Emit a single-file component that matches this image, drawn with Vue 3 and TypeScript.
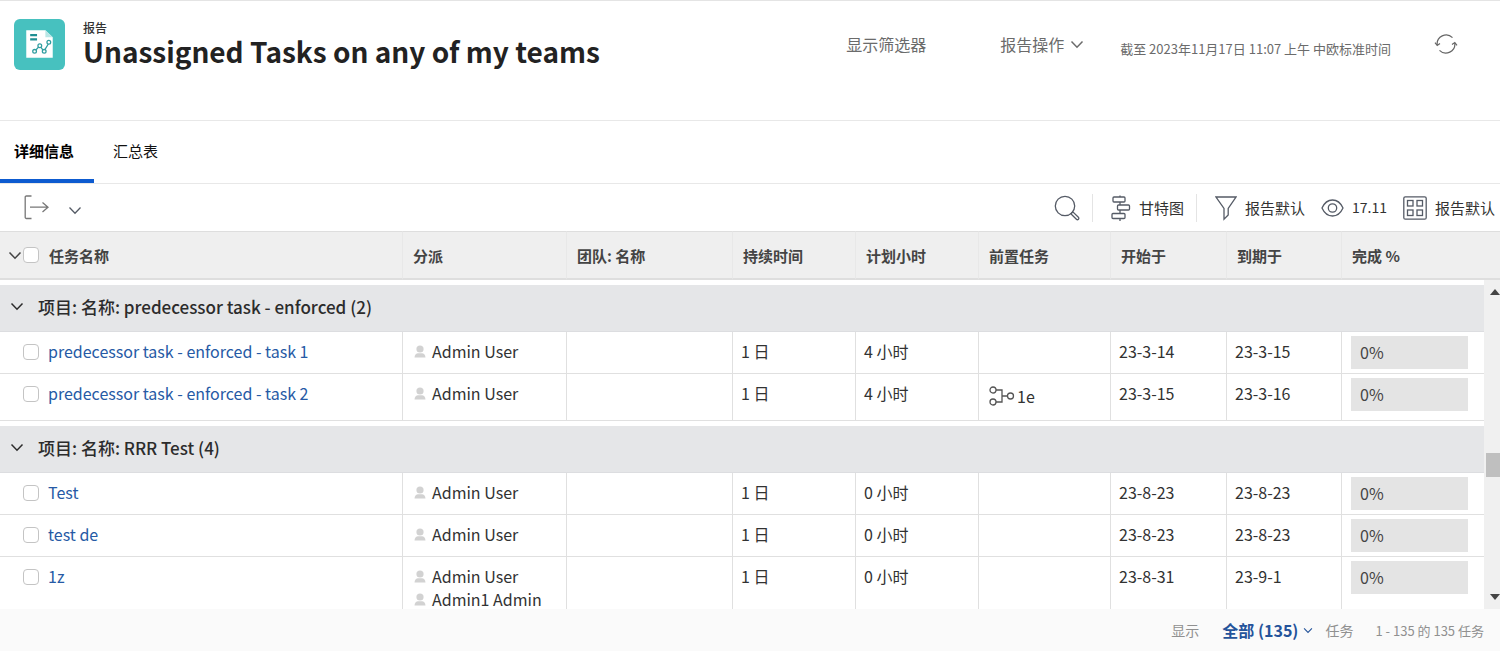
<script setup lang="ts">
import { reactive, ref } from 'vue'

interface Task {
  id: number
  name: string
  assignees: string[]
  team: string
  duration: string
  planned: string
  predecessor: string
  start: string
  due: string
  percent: number
}

interface Group {
  label: string
  open: boolean
  tasks: Task[]
}

const columns = [
  { key: 'assignee', label: '分派' },
  { key: 'team', label: '团队: 名称' },
  { key: 'duration', label: '持续时间' },
  { key: 'planned', label: '计划小时' },
  { key: 'predecessor', label: '前置任务' },
  { key: 'start', label: '开始于' },
  { key: 'due', label: '到期于' },
  { key: 'percent', label: '完成 %' },
]

function task(id: number, name: string, planned: string, start: string, due: string, extra: Partial<Task> = {}): Task {
  return { id, name, assignees: ['Admin User'], team: '', duration: '1 日', planned, predecessor: '', start, due, percent: 0, ...extra }
}

const groups = reactive<Group[]>([
  {
    label: '项目: 名称: predecessor task - enforced (2)',
    open: true,
    tasks: [
      task(1, 'predecessor task - enforced - task 1', '4 小时', '23-3-14', '23-3-15'),
      task(2, 'predecessor task - enforced - task 2', '4 小时', '23-3-15', '23-3-16', { predecessor: '1e' }),
    ],
  },
  {
    label: '项目: 名称: RRR Test (4)',
    open: true,
    tasks: [
      task(3, 'Test', '0 小时', '23-8-23', '23-8-23'),
      task(4, 'test de', '0 小时', '23-8-23', '23-8-23'),
      task(5, '1z', '0 小时', '23-8-31', '23-9-1', { assignees: ['Admin User', 'Admin1 Admin'] }),
    ],
  },
])

const tabs = ['详细信息', '汇总表']
const activeTab = ref(0)
const selected = ref<number[]>([])

function toggleAll(event: Event) {
  const checked = (event.target as HTMLInputElement).checked
  selected.value = checked ? groups.flatMap((g) => g.tasks.map((t) => t.id)) : []
}
</script>

<template>
  <div class="page">
    <header class="header">
      <svg class="logo" viewBox="0 0 52 52" aria-hidden="true">
        <rect width="52" height="52" rx="6" fill="#47c1bf" />
        <path d="M12.500 11.500H32L39.500 18.500V39.500H12.500Z" fill="#fff" />
        <path d="M32 11.500V18.500H39.500Z" fill="#b9e7e6" />
        <path d="M16.500 16.500H23.500M16.500 20.800H23.500" stroke="#1f8f93" stroke-width="2.200" />
        <g fill="none" stroke="#2f9ea0" stroke-width="1.300">
          <path d="M22.300 31.600L25 28.700M27.500 28.900L29.600 31.700M31.500 31.300L35 25.500" />
          <circle cx="21" cy="33" r="1.900" />
          <circle cx="26.300" cy="27.300" r="1.900" />
          <circle cx="30.800" cy="33" r="1.900" />
          <circle cx="35.500" cy="23.700" r="1.900" />
        </g>
      </svg>
      <div class="heading">
        <span class="kind">报告</span>
        <h1>Unassigned Tasks on any of my teams</h1>
      </div>
      <div class="actions">
        <button type="button" class="action">显示筛选器</button>
        <button type="button" class="action menu">
          报告操作
          <svg class="chev" viewBox="0 0 14 9" aria-hidden="true"><path d="M1.500 1.500L7 7.200L12.500 1.500" /></svg>
        </button>
        <span class="asof">截至 2023年11月17日 11:07 上午 中欧标准时间</span>
        <button type="button" class="refresh" aria-label="刷新">
          <svg viewBox="0 0 24 22" aria-hidden="true">
            <path d="M3.200 12A9 9 0 0 1 18.500 4.600M20.800 10A9 9 0 0 1 5.500 17.400" />
            <path d="M1 9.600L3.200 12.400L6 10.400M18 11.600L20.800 9.600L23 12.400" />
          </svg>
        </button>
      </div>
    </header>

    <nav class="tabs">
      <button
        v-for="(tab, i) in tabs"
        :key="tab"
        type="button"
        class="tab"
        :class="{ active: activeTab === i }"
        @click="activeTab = i"
      >{{ tab }}</button>
    </nav>

    <div class="toolbar">
      <button type="button" class="tool export" aria-label="导出">
        <svg class="export-icon" viewBox="0 0 25 25" aria-hidden="true">
          <path d="M7.500 1H2.500A1.200 1.200 0 0 0 1.200 2.200V22.200A1.200 1.200 0 0 0 2.500 23.500H7.500M6 12.200H24M18.500 7.500L24 12.200L18.500 17" />
        </svg>
        <svg class="chev" viewBox="0 0 14 9" aria-hidden="true"><path d="M1.500 1.500L7 7.200L12.500 1.500" /></svg>
      </button>
      <div class="tools">
        <button type="button" class="tool search" aria-label="搜索">
          <svg class="i26" viewBox="0 0 26 26" aria-hidden="true">
            <circle cx="11" cy="11" r="9.700" />
            <path d="M16.800 18.800L18.800 16.800L24.400 22.200A1.400 1.400 0 0 1 22.400 24.300Z" />
          </svg>
        </button>
        <button type="button" class="tool gantt">
          <svg class="gantt-icon" viewBox="0 0 20 26" aria-hidden="true">
            <path d="M9 0.500V2M9 7V10M9 15V18.500M9 23.500V26" />
            <rect x="2" y="2" width="12" height="5" rx="1" />
            <rect x="6.500" y="10" width="12" height="5" rx="1" />
            <rect x="1" y="18.500" width="13" height="5" rx="1" />
          </svg>
          甘特图
        </button>
        <button type="button" class="tool">
          <svg class="filter-icon" viewBox="0 0 22 26" aria-hidden="true">
            <path d="M1 2H21L13.200 13.500V20L9 24.200V13.500Z" />
          </svg>
          报告默认
        </button>
        <button type="button" class="tool view">
          <svg class="eye-icon" viewBox="0 0 23 20" aria-hidden="true">
            <path d="M1 10C3.500 4.500 7.500 2 11.500 2S19.500 4.500 22 10C19.500 15.500 15.500 18 11.500 18S3.500 15.500 1 10Z" />
            <circle cx="11.500" cy="10" r="4.200" />
          </svg>
          17.11
        </button>
        <button type="button" class="tool">
          <svg class="grid-icon" viewBox="0 0 24 24" aria-hidden="true">
            <rect x="0.800" y="0.800" width="22.400" height="22.400" rx="1.500" />
            <rect x="4.500" y="4.500" width="5.500" height="5.500" />
            <rect x="14" y="4.500" width="5.500" height="5.500" />
            <rect x="4.500" y="14" width="5.500" height="5.500" />
            <rect x="14" y="14" width="5.500" height="5.500" />
          </svg>
          报告默认
        </button>
      </div>
    </div>

    <main class="grid">
      <table>
        <colgroup>
          <col />
          <col v-for="c in columns" :key="c.key" :class="'w-' + c.key" />
        </colgroup>
        <thead>
          <tr>
            <th scope="col" class="name-head">
              <div class="name-row">
                <svg class="chev" viewBox="0 0 14 9" aria-hidden="true"><path d="M1.500 1.500L7 7.200L12.500 1.500" /></svg>
                <input type="checkbox" aria-label="全选" @change="toggleAll" />
                <span>任务名称</span>
              </div>
            </th>
            <th v-for="c in columns" :key="c.key" scope="col">{{ c.label }}</th>
          </tr>
        </thead>
        <tbody v-for="g in groups" :key="g.label">
          <tr>
            <th class="group" :colspan="columns.length + 1" scope="colgroup">
              <button type="button" class="group-toggle" :aria-expanded="g.open" @click="g.open = !g.open">
                <svg class="chev" viewBox="0 0 14 9" aria-hidden="true"><path d="M1.500 1.500L7 7.200L12.500 1.500" /></svg>
                {{ g.label }}
              </button>
            </th>
          </tr>
          <template v-if="g.open">
            <tr v-for="t in g.tasks" :key="t.id">
              <td class="name-cell">
                <div class="name-row">
                  <input v-model="selected" type="checkbox" :value="t.id" :aria-label="t.name" />
                  <a href="#">{{ t.name }}</a>
                </div>
              </td>
              <td class="people">
                <div v-for="p in t.assignees" :key="p" class="person">
                  <svg viewBox="0 0 12 13" aria-hidden="true">
                    <circle cx="6" cy="4" r="3.600" />
                    <path d="M0.500 12.500C0.500 9.500 2.500 8.400 4 8.200H8C9.500 8.400 11.500 9.500 11.500 12.500Z" />
                  </svg>
                  {{ p }}
                </div>
              </td>
              <td>{{ t.team }}</td>
              <td>{{ t.duration }}</td>
              <td>{{ t.planned }}</td>
              <td>
                <div v-if="t.predecessor" class="pred">
                  <svg viewBox="0 0 26 20" aria-hidden="true">
                    <circle cx="4" cy="4" r="3" />
                    <circle cx="4" cy="16" r="3" />
                    <circle cx="21.500" cy="10" r="3" />
                    <path d="M7 4H13V16H7M13 10H18.500" />
                  </svg>
                  {{ t.predecessor }}
                </div>
              </td>
              <td>{{ t.start }}</td>
              <td>{{ t.due }}</td>
              <td class="progress-cell"><div class="progress">{{ t.percent }}%</div></td>
            </tr>
          </template>
        </tbody>
      </table>
      <div class="side">
        <div class="side-head"></div>
        <div class="scrollbar">
          <span class="arrow up"></span>
          <span class="above"></span>
          <span class="thumb"></span>
          <span class="below"></span>
          <span class="arrow down"></span>
        </div>
      </div>
    </main>

    <footer class="footer">
      <span>显示</span>
      <button type="button" class="all">
        全部 (135)
        <svg class="chev small" viewBox="0 0 14 9" aria-hidden="true"><path d="M1.500 1.500L7 7.200L12.500 1.500" /></svg>
      </button>
      <span>任务</span>
      <span class="range">1 - 135 的 135 任务</span>
    </footer>
  </div>
</template>

<style>
body {
  margin: 0;
  background: #fff;
}
</style>

<style scoped>
.page {
  display: flex;
  flex-direction: column;
  height: 100vh;
  overflow: hidden;
  box-sizing: border-box;
  border-top: 1px solid #e4e4e4;
  color: #323232;
  font-family: "Noto Sans CJK SC", "Noto Sans", sans-serif;
  font-size: 16px;
  line-height: 23px;
  white-space: nowrap;
}
button {
  display: flex;
  align-items: center;
  margin: 0;
  padding: 0;
  border: 0;
  background: none;
  color: inherit;
  font: inherit;
  white-space: nowrap;
  cursor: pointer;
}
svg {
  display: block;
  flex: none;
  fill: none;
}
.chev {
  width: 14px;
  height: 9px;
  stroke: currentColor;
  stroke-width: 1.500;
}
.chev.small {
  width: 10px;
  height: 7px;
}
.header {
  display: flex;
  align-items: flex-start;
  height: 120px;
  box-sizing: border-box;
  padding: 18px 42px 0 14px;
  border-bottom: 1px solid #e8e8e8;
}
.logo {
  width: 51px;
  height: 51px;
}
.heading {
  margin-left: 18px;
}
.kind {
  display: block;
  font-size: 12px;
  font-weight: 500;
  line-height: 18px;
}
h1 {
  margin: 0;
  font-size: 28px;
  font-weight: 700;
  line-height: 28px;
  color: #222;
}
.actions {
  display: flex;
  align-items: center;
  margin-left: auto;
  height: 50px;
  color: #6b6b6b;
}
.menu {
  gap: 6px;
  margin-left: 74px;
}
.asof {
  margin: 8px 0 0 36px;
  font-size: 13px;
}
.refresh {
  margin-left: 43px;
}
.refresh svg {
  width: 24px;
  height: 22px;
  stroke: #666;
  stroke-width: 1.200;
}
.tabs {
  display: flex;
  height: 63px;
  box-sizing: border-box;
  border-bottom: 1px solid #e8e8e8;
}
.tab {
  height: 62px;
  padding: 0 20px 0 14px;
  border-bottom: 4px solid transparent;
  box-sizing: border-box;
  color: #111;
  font-size: 15px;
}
.tab.active {
  border-bottom-color: #0d5bd0;
  color: #000;
  font-weight: 700;
}
.tab + .tab {
  margin-left: 5px;
}
.toolbar {
  display: flex;
  align-items: center;
  justify-content: space-between;
  height: 47px;
  padding: 0 5px 0 24px;
}
.tool {
  gap: 8px;
  font-size: 15px;
}
.tool svg {
  stroke: #555b66;
  stroke-width: 1.300;
}
.export {
  gap: 19px;
}
.export .chev {
  margin-top: 6px;
}
.export-icon {
  width: 25px;
  height: 25px;
}
.export .export-icon {
  stroke: #777;
}
.tools {
  display: flex;
  align-items: center;
  gap: 16px;
}
.search,
.gantt {
  height: 28px;
  padding-right: 12px;
  border-right: 1px solid #e4e4e4;
}
.gantt {
  margin: 0 2px;
}
.view {
  font-size: 14px;
}
.i26 {
  width: 26px;
  height: 26px;
}
.gantt-icon {
  width: 20px;
  height: 26px;
}
.filter-icon {
  width: 22px;
  height: 26px;
}
.eye-icon {
  width: 23px;
  height: 20px;
}
.grid-icon {
  width: 24px;
  height: 24px;
}
.grid {
  display: flex;
  align-items: flex-start;
  flex: 1;
  min-height: 0;
  overflow: hidden;
}
table {
  flex: 1;
  width: 0;
  table-layout: fixed;
  border-collapse: separate;
  border-spacing: 0;
}
.w-assignee {
  width: 164px;
}
.w-team {
  width: 166px;
}
.w-duration,
.w-planned {
  width: 123px;
}
.w-predecessor {
  width: 132px;
}
.w-start {
  width: 116px;
}
.w-due {
  width: 115px;
}
.w-percent {
  width: 142px;
}
thead th {
  height: 49px;
  box-sizing: border-box;
  padding: 0 10px;
  border-top: 1px solid #dedede;
  border-bottom: 2px solid #dedede;
  border-right: 1px solid #e8e8e8;
  background: #efefef;
  color: #444;
  font-size: 15px;
  font-weight: 700;
  text-align: left;
}
thead th:last-child {
  border-right: 0;
}
thead .name-head {
  padding: 0 0 0 8px;
}
.name-row {
  display: flex;
  align-items: center;
}
.name-head .name-row span {
  margin-left: 10px;
}
.name-head .chev {
  margin-right: 1px;
}
input[type="checkbox"] {
  appearance: none;
  flex: none;
  width: 16px;
  height: 16px;
  margin: 0;
  box-sizing: border-box;
  border: 1px solid #c4c4c4;
  border-radius: 4px;
  background: #fff;
}
input[type="checkbox"]:checked {
  background: #0d5bd0;
}
.group {
  height: 52px;
  box-sizing: border-box;
  padding: 0 10px 4px;
  border-top: 5px solid #fff;
  border-bottom: 1px solid #dcdde0;
  background: #e5e6e8;
  background-clip: padding-box;
  text-align: left;
}
.group-toggle {
  gap: 14px;
  color: #2c2c2c;
  font-size: 17px;
  font-weight: 500;
}
td {
  padding: 8px 8px 10px;
  border-right: 1px solid #e0e0e0;
  border-bottom: 1px solid #e0e0e0;
  vertical-align: top;
}
td:last-child {
  border-right: 0;
}
.name-cell {
  padding-left: 23px;
}
.name-cell a {
  margin-left: 9px;
  color: #265aa5;
  text-decoration: none;
}
.people {
  padding-left: 11px;
}
.person {
  display: flex;
  align-items: center;
  gap: 6px;
}
.person svg {
  width: 12px;
  height: 13px;
  fill: #d2d2d2;
}
.pred {
  display: flex;
  align-items: center;
  gap: 2px;
  height: 28px;
  padding-left: 2px;
}
.pred svg {
  width: 26px;
  height: 20px;
  stroke: #555;
  stroke-width: 1.300;
}
.progress-cell {
  padding: 4px 16px 4px 9px;
}
.progress {
  padding: 5px 9px;
  background: #e4e4e4;
  color: #444;
}
.side {
  display: flex;
  flex-direction: column;
  align-self: stretch;
  width: 16px;
}
.side-head {
  height: 49px;
  box-sizing: border-box;
  border-top: 1px solid #dedede;
  border-bottom: 2px solid #dedede;
  background: #efefef;
}
.scrollbar {
  display: flex;
  flex: 1;
  flex-direction: column;
  align-items: flex-end;
  padding: 9px 0;
  background: #f0f0f0;
}
.arrow {
  border: 5px solid transparent;
}
.up {
  border-top: 0;
  border-bottom: 6px solid #444;
}
.down {
  border-bottom: 0;
  border-top: 6px solid #444;
}
.above {
  flex: 158;
}
.below {
  flex: 117;
}
.thumb {
  width: 14px;
  height: 24px;
  background: #bfbfbf;
}
.footer {
  display: flex;
  align-items: center;
  justify-content: flex-end;
  height: 42px;
  padding: 0 16px;
  background: #fafafa;
  color: #909090;
  font-size: 14px;
}
.all {
  gap: 5px;
  margin: 0 12px 0 23px;
  color: #24539a;
  font-size: 16px;
  font-weight: 700;
}
.range {
  margin-left: 22px;
  font-size: 13px;
}
</style>
